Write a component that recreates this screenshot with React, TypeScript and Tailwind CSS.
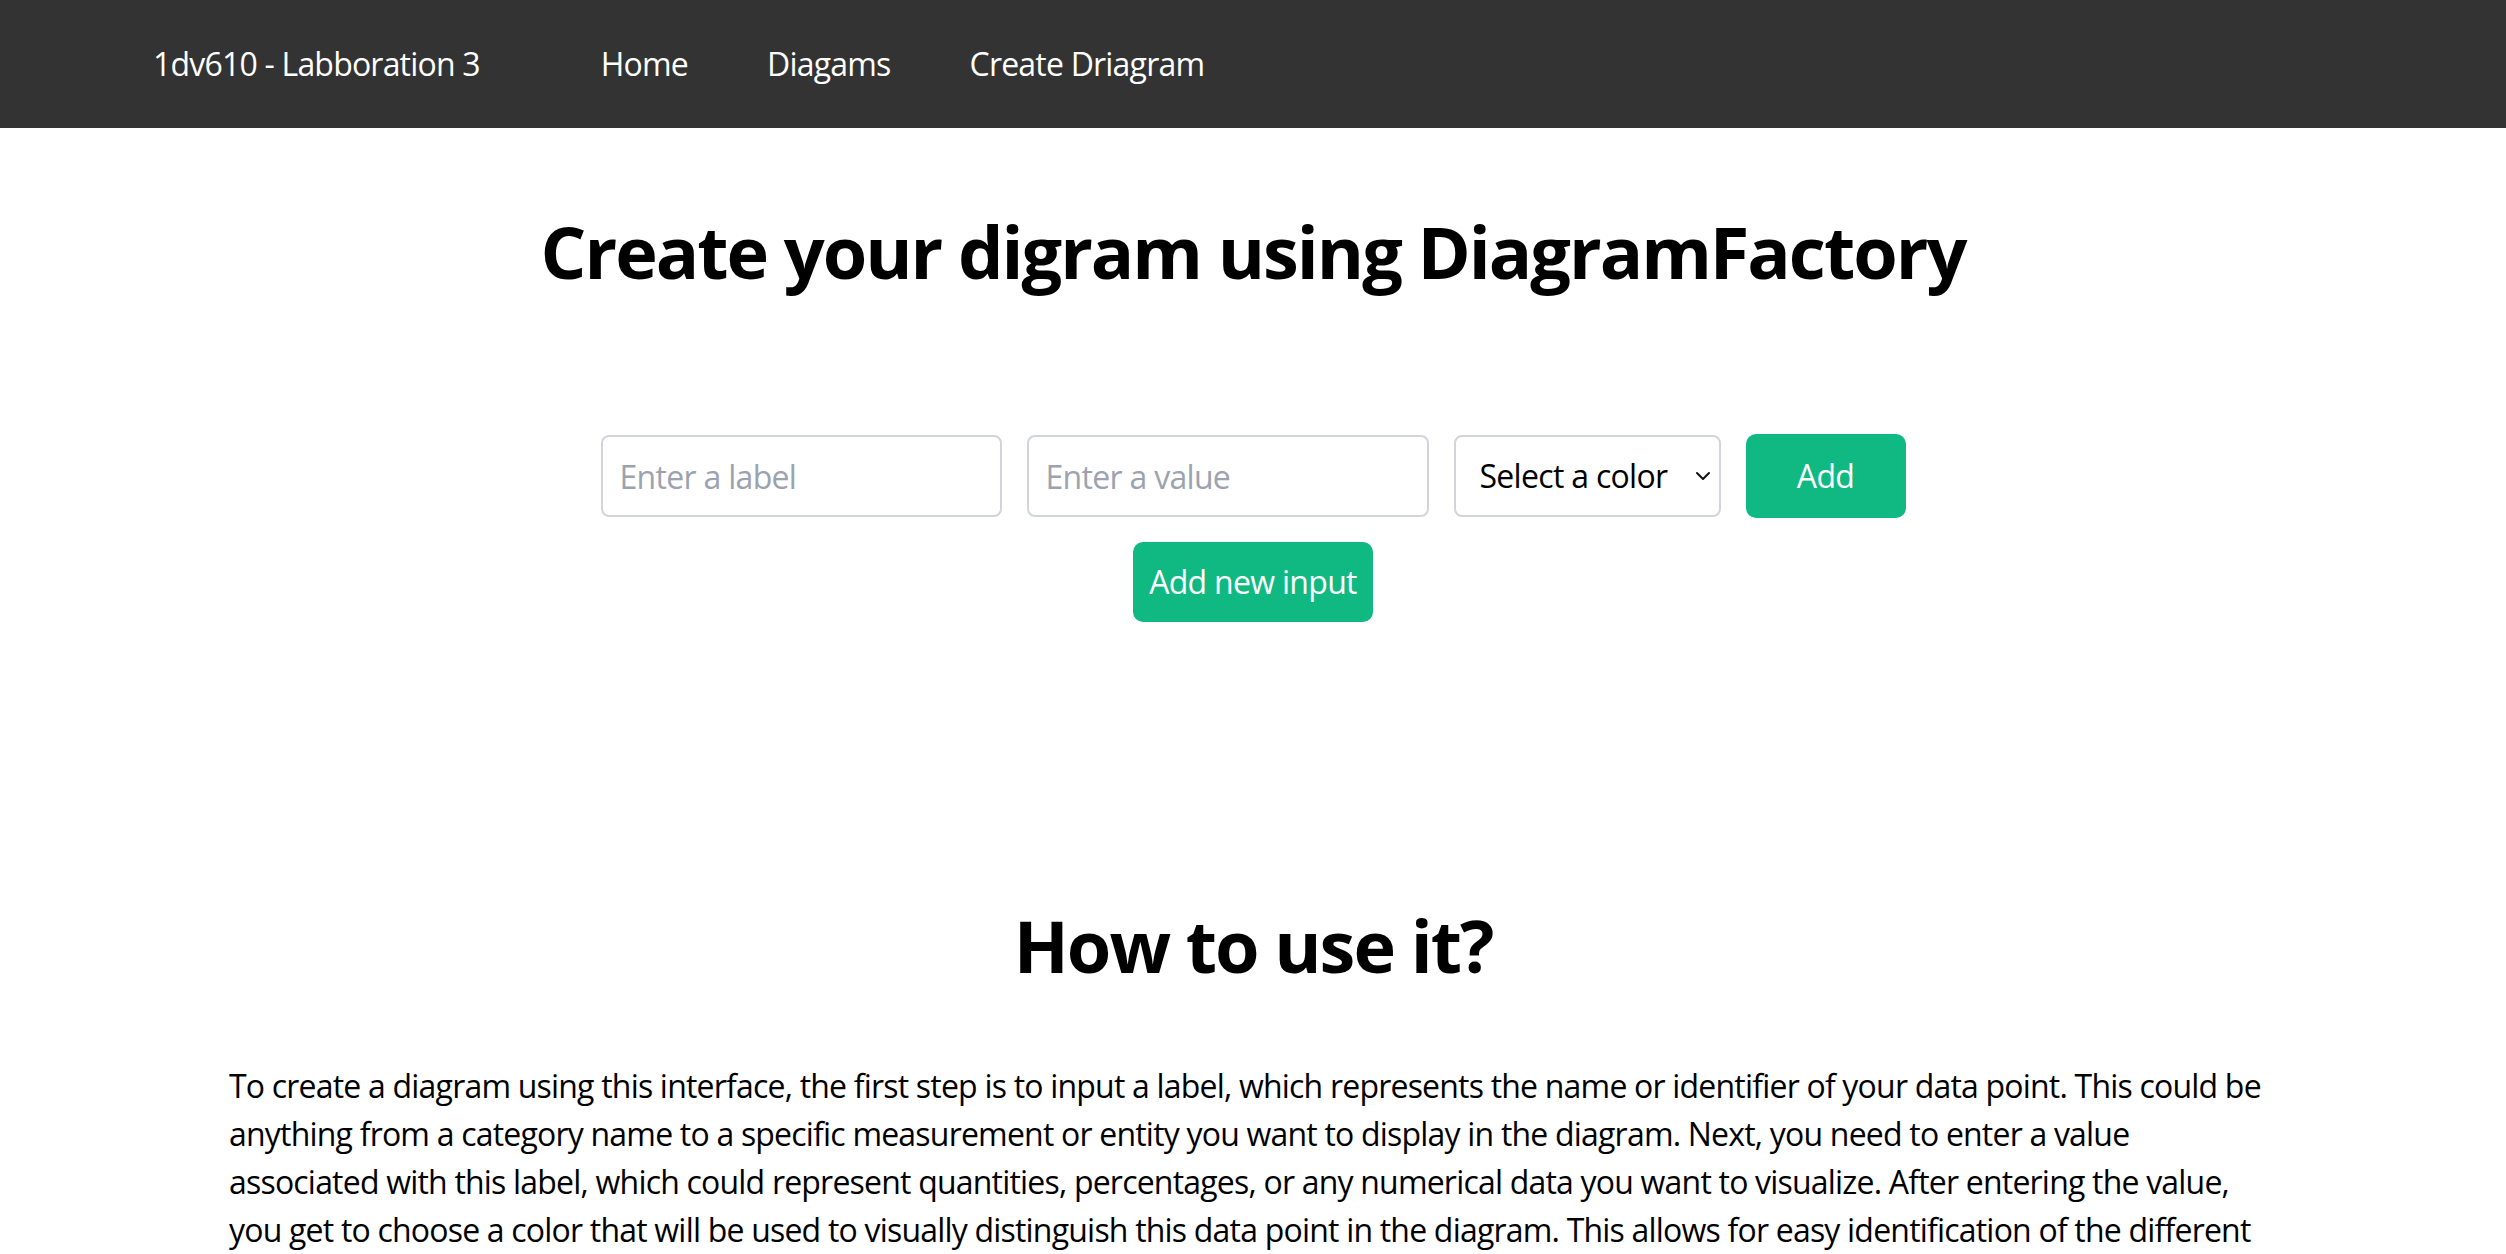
import React from "react";

export default function App() {
  const font = { fontFamily: '"Open Sans", "Noto Sans", sans-serif' };
  return (
    <div className="min-h-screen bg-white text-black" style={font}>
      <nav className="h-[128px] bg-[#333333] flex items-center pl-[153px] text-white text-[32px] leading-[48px] tracking-[-0.8px]">
        <span>1dv610 - Labboration 3</span>
        <div className="flex items-center gap-[79px] ml-[121px]">
          <a className="cursor-pointer">Home</a>
          <a className="cursor-pointer">Diagams</a>
          <a className="cursor-pointer">Create Driagram</a>
        </div>
      </nav>

      <main className="flex flex-col items-center">
        <h1 className="mt-[83px] text-[72px] leading-[80px] font-bold text-center tracking-[-2px]">
          Create your digram using DiagramFactory
        </h1>

        <div className="mt-[143px] flex items-center gap-[25px] tracking-[-0.7px]">
          <input
            type="text"
            placeholder="Enter a label"
            className="w-[401px] h-[82px] border-2 border-[#d1d5db] rounded-[8px] px-[17px] text-[32px] leading-[48px] placeholder:text-[#9ca3af] outline-none"
          />
          <input
            type="text"
            placeholder="Enter a value"
            className="w-[402px] h-[82px] border-2 border-[#d1d5db] rounded-[8px] px-[17px] text-[32px] leading-[48px] placeholder:text-[#9ca3af] outline-none"
          />
          <div className="relative">
            <select className="appearance-none w-[267px] h-[82px] border-2 border-[#d1d5db] rounded-[8px] pl-[24px] pr-[40px] text-[32px] leading-[48px] bg-white text-black outline-none">
              <option>Select a color</option>
              <option>Red</option>
              <option>Green</option>
              <option>Blue</option>
            </select>
            <svg
              className="absolute right-[10px] top-[36px] pointer-events-none"
              width="16"
              height="10"
              viewBox="0 0 16 10"
              fill="none"
            >
              <path d="M2 2 L8 8 L14 2" stroke="#111" strokeWidth="2" strokeLinecap="round" strokeLinejoin="round" />
            </svg>
          </div>
          <button className="w-[160px] h-[84px] bg-[#10b981] rounded-[10px] text-white text-[32px] leading-[48px]">
            Add
          </button>
        </div>

        <button className="mt-[24px] w-[240px] h-[80px] bg-[#10b981] rounded-[10px] text-white text-[32px] leading-[48px] tracking-[-0.7px]">
          Add new input
        </button>

        <h2 className="mt-[283px] text-[72px] leading-[80px] font-bold text-center tracking-[-2px]">How to use it?</h2>

        <p className="mt-[77px] w-[2048px] text-[32px] leading-[48px] pb-[80px] tracking-[-0.8px]">
          To create a diagram using this interface, the first step is to input a label, which represents the name or
          identifier of your data point. This could be anything from a category name to a specific measurement or entity
          you want to display in the diagram. Next, you need to enter a value associated with this label, which could
          represent quantities, percentages, or any numerical data you want to visualize. After entering the value, you
          get to choose a color that will be used to visually distinguish this data point in the diagram. This allows for
          easy identification of the different data points when the diagram is created. Once you have filled in the
          label, value and color, click the Add button to add the data point to your diagram.
        </p>
      </main>
    </div>
  );
}
